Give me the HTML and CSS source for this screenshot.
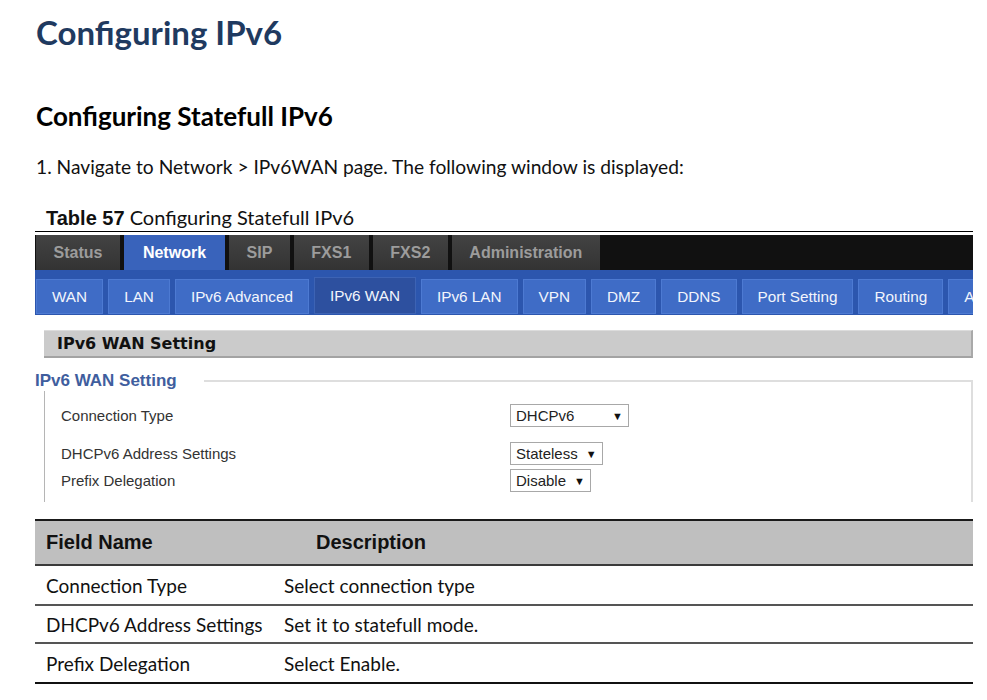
FILE: index.html
```html
<!DOCTYPE html>
<html lang="en">
<head>
    <meta charset="UTF-8">
    <title>Configuring IPv6</title>
    <link rel="stylesheet" href="styles.css">
</head>
<body>
    <div class="doc">
        <h1 class="title">Configuring IPv6</h1>
        <h2 class="subtitle">Configuring Statefull IPv6</h2>
        <p class="step">1. Navigate to Network &gt; IPv6WAN page. The following window is displayed:</p>
        <div class="caption"><b>Table 57</b> Configuring Statefull IPv6</div>

        <!-- router web ui screenshot -->
        <div class="shot">
            <div class="main-tabs">
                <span class="main-tab">Status</span>
                <span class="main-tab active">Network</span>
                <span class="main-tab">SIP</span>
                <span class="main-tab">FXS1</span>
                <span class="main-tab">FXS2</span>
                <span class="main-tab">Administration</span>
            </div>
            <div class="sub-tabs">
                <span class="sub-tab">WAN</span>
                <span class="sub-tab">LAN</span>
                <span class="sub-tab">IPv6 Advanced</span>
                <span class="sub-tab active">IPv6 WAN</span>
                <span class="sub-tab">IPv6 LAN</span>
                <span class="sub-tab">VPN</span>
                <span class="sub-tab">DMZ</span>
                <span class="sub-tab">DDNS</span>
                <span class="sub-tab">Port Setting</span>
                <span class="sub-tab">Routing</span>
                <span class="sub-tab">Advance</span>
            </div>

            <div class="section-bar">IPv6 WAN Setting</div>

            <div class="legend-row">
                <span class="legend">IPv6 WAN Setting</span>
                <span class="rule"></span>
            </div>
            <div class="fields">
                <div class="field first">
                    <span class="label">Connection Type</span>
                    <span class="select wide">DHCPv6 <i>▼</i></span>
                </div>
                <div class="field second">
                    <span class="label">DHCPv6 Address Settings</span>
                    <span class="select">Stateless <i>▼</i></span>
                </div>
                <div class="field third">
                    <span class="label">Prefix Delegation</span>
                    <span class="select">Disable <i>▼</i></span>
                </div>
            </div>
        </div>

        <table class="desc">
            <thead>
                <tr>
                    <th class="col-name">Field Name</th>
                    <th class="col-desc">Description</th>
                </tr>
            </thead>
            <tbody>
                <tr>
                    <td>Connection Type</td>
                    <td>Select connection type</td>
                </tr>
                <tr class="mid">
                    <td>DHCPv6 Address Settings</td>
                    <td>Set it to statefull mode.</td>
                </tr>
                <tr>
                    <td>Prefix Delegation</td>
                    <td>Select Enable.</td>
                </tr>
            </tbody>
        </table>
    </div>
</body>
</html>
```

FILE: styles.css
```css
body {
    margin: 0;
    background-color: white;
    font-family: Lato, "Open Sans", sans-serif;
    color: #111;
}

.doc {
    margin-left: 35px;
    width: 938px;
}

.title {
    margin: 11px 0 0 1px;
    font-size: 33px;
    line-height: 42px;
    font-weight: bold;
    color: #1f3a60;
}

.subtitle {
    margin: 46px 0 0 1px;
    font-size: 26px;
    line-height: 34px;
    font-weight: bold;
    color: #000;
}

.step {
    margin: 22px 0 0 1px;
    font-size: 19.2px;
    line-height: 24px;
}

.caption {
    margin-top: 27px;
    padding: 0 0 2px 11px;
    font-size: 20px;
    line-height: 22px;
    border-bottom: 1px solid #000;
}

.caption b {
    font-family: "Liberation Sans", Arial, sans-serif;
    font-size: 20px;
}

/* screenshot of the device web page */
.shot {
    margin-top: 3px;
    font-family: "Liberation Sans", Arial, sans-serif;
}

.main-tabs {
    display: flex;
    gap: 4px;
    height: 35px;
    padding-left: 1px;
    background-color: #111;
}

.main-tab {
    padding: 0 17.5px;
    line-height: 35px;
    font-size: 16px;
    font-weight: bold;
    color: #9c9c9c;
    background: linear-gradient(#434343, #333);
}

.main-tab.active {
    padding: 0 19px;
    color: white;
    background: #3963bb;
}

.sub-tabs {
    display: flex;
    gap: 5px;
    height: 35px;
    padding: 9px 0 1px 1px;
    background-color: #2c56ae;
    overflow: hidden;
    white-space: nowrap;
}

.sub-tab {
    padding: 0 15px;
    line-height: 33px;
    font-size: 15.3px;
    color: #f2f5fc;
    background-color: #3f6cc6;
    border: 1px solid #4d7ad2;
}

.sub-tab.active {
    margin-top: -2px;
    line-height: 35px;
    background-color: #2d509f;
    border-color: #3d63b4;
}

.section-bar {
    margin: 15px 0 0 9px;
    height: 25px;
    padding-left: 13px;
    font-family: "DejaVu Sans", Verdana, sans-serif;
    font-size: 16px;
    font-weight: bold;
    line-height: 25px;
    color: #111;
    background-color: #cbcbcb;
    border-top: 1px solid #dcdcdc;
    border-right: 2px solid #a9a9a9;
    border-bottom: 2px solid #a3a3a3;
}

.legend-row {
    display: flex;
    margin-top: 13px;
    height: 20px;
}

.legend {
    font-size: 17px;
    font-weight: bold;
    line-height: 20px;
    color: #3f5e9e;
}

.rule {
    flex: 1;
    margin: 9px 0 0 27px;
    border-top: 2px solid #dedede;
    border-right: 2px solid #dedede;
}

.fields {
    margin-left: 9px;
    padding: 0 0 10px 16px;
    border-left: 1px solid #b5b5b5;
    border-right: 2px solid #dedede;
    font-size: 15px;
    color: #333;
}

.field {
    display: flex;
    align-items: center;
}

.field.first {
    padding-top: 13px;
}

.field.second {
    margin-top: 15px;
}

.field.third {
    margin-top: 4px;
}

.label {
    width: 449px;
}

.select {
    display: flex;
    align-items: center;
    gap: 8px;
    height: 21px;
    padding: 0 5px;
    color: #222;
    border: 1px solid #a8a8a8;
}

.select.wide {
    width: 107px;
    justify-content: space-between;
}

.select i {
    font-style: normal;
    font-size: 11px;
    color: #111;
}

/* field description table */
.desc {
    width: 938px;
    margin-top: 17px;
    border-collapse: collapse;
    font-size: 19px;
}

.desc th {
    height: 41px;
    text-align: left;
    font-family: "Liberation Sans", Arial, sans-serif;
    font-size: 20px;
    background-color: #bfbfbf;
    border-top: 2px solid #1a1a1a;
    border-bottom: 2px solid #3a3a3a;
}

.desc .col-name {
    width: 226px;
    padding-left: 11px;
}

.desc .col-desc {
    padding-left: 43px;
}

.desc td {
    height: 38px;
    padding: 0 0 0 11px;
    border-bottom: 2px solid #555;
}

.desc tr.mid td {
    height: 36px;
}

.desc tr:last-child td {
    border-bottom-color: #111;
}
```
